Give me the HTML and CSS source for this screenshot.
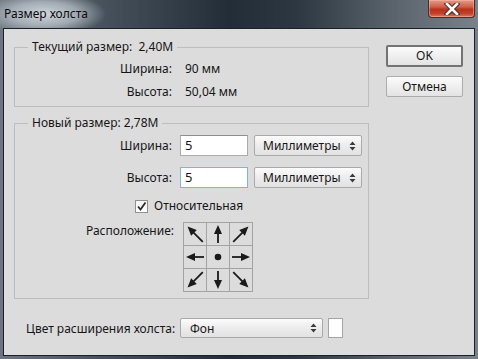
FILE: index.html
```html
<!DOCTYPE html>
<html lang="ru">
<head>
    <meta charset="UTF-8">
    <title>Размер холста</title>
    <link rel="stylesheet" href="styles.css">
</head>
<body>
    <div class="window">
        <div class="titlebar">
            <span class="title">Размер холста</span>
            <div class="close">
                <svg width="20" height="12" viewBox="0 0 20 12">
                    <path d="M5 1 L15 11 M15 1 L5 11" stroke="#4a2a26" stroke-width="4.6" stroke-linecap="square"/>
                    <path d="M5 1 L15 11 M15 1 L5 11" stroke="#fff" stroke-width="2.6" stroke-linecap="square"/>
                </svg>
            </div>
        </div>

        <div class="client">
            <div class="main">
                <fieldset class="group current">
                    <legend>Текущий размер:&nbsp; 2,40M</legend>
                    <div class="rows">
                        <span class="lbl">Ширина:</span><span class="val">90 мм</span>
                        <span class="lbl">Высота:</span><span class="val">50,04 мм</span>
                    </div>
                </fieldset>

                <fieldset class="group new">
                    <legend>Новый размер: 2,78M</legend>
                    <div class="fields">
                        <span class="lbl">Ширина:</span>
                        <div class="input">5</div>
                        <div class="select units">Миллиметры
                            <svg class="updown" width="7" height="10" viewBox="0 0 7 10"><path d="M0.5 4 L3.5 0.5 L6.5 4 Z M0.5 6 L3.5 9.5 L6.5 6 Z" fill="#3a3a3a"/></svg>
                        </div>
                        <span class="lbl">Высота:</span>
                        <div class="input focus">5</div>
                        <div class="select units">Миллиметры
                            <svg class="updown" width="7" height="10" viewBox="0 0 7 10"><path d="M0.5 4 L3.5 0.5 L6.5 4 Z M0.5 6 L3.5 9.5 L6.5 6 Z" fill="#3a3a3a"/></svg>
                        </div>
                    </div>

                    <div class="check">
                        <span class="box">
                            <svg width="11" height="11" viewBox="0 0 11 11"><path d="M2 5.5 L4.5 8.5 L9.5 1.5" fill="none" stroke="#2b2b2b" stroke-width="1.8"/></svg>
                        </span>
                        Относительная
                    </div>

                    <div class="anchor-row">
                        <span class="lbl">Расположение:</span>
                        <div class="anchor">
                            <div class="cell"><svg viewBox="0 0 22 22"><use href="#diag" transform="rotate(-45 11 11)"/></svg></div>
                            <div class="cell"><svg viewBox="0 0 22 22"><use href="#arr"/></svg></div>
                            <div class="cell"><svg viewBox="0 0 22 22"><use href="#diag" transform="rotate(45 11 11)"/></svg></div>
                            <div class="cell"><svg viewBox="0 0 22 22"><use href="#arr" transform="rotate(-90 11 11)"/></svg></div>
                            <div class="cell"><svg viewBox="0 0 22 22"><circle cx="11" cy="11" r="3.3" fill="#1a1a1a"/></svg></div>
                            <div class="cell"><svg viewBox="0 0 22 22"><use href="#arr" transform="rotate(90 11 11)"/></svg></div>
                            <div class="cell"><svg viewBox="0 0 22 22"><use href="#diag" transform="rotate(-135 11 11)"/></svg></div>
                            <div class="cell"><svg viewBox="0 0 22 22"><use href="#arr" transform="rotate(180 11 11)"/></svg></div>
                            <div class="cell"><svg viewBox="0 0 22 22"><use href="#diag" transform="rotate(135 11 11)"/></svg></div>
                        </div>
                    </div>
                </fieldset>

                <div class="ext">
                    <span class="ext-lbl">Цвет расширения холста:</span>
                    <div class="select bg">Фон
                        <svg class="updown" width="7" height="10" viewBox="0 0 7 10"><path d="M0.5 4 L3.5 0.5 L6.5 4 Z M0.5 6 L3.5 9.5 L6.5 6 Z" fill="#3a3a3a"/></svg>
                    </div>
                    <div class="swatch"></div>
                </div>
            </div>

            <div class="side">
                <div class="btn default">OK</div>
                <div class="btn">Отмена</div>
            </div>
        </div>
    </div>

    <svg width="0" height="0" class="defs">
        <defs>
            <g id="arr">
                <path d="M11 20 L11 9" stroke="#1a1a1a" stroke-width="1.8"/>
                <path d="M11 2 L15 11 L7 11 Z" fill="#1a1a1a"/>
            </g>
            <g id="diag">
                <path d="M11 22 L11 9" stroke="#1a1a1a" stroke-width="1.8"/>
                <path d="M11 0.5 L15 9.5 L7 9.5 Z" fill="#1a1a1a"/>
            </g>
        </defs>
    </svg>
</body>
</html>
```

FILE: styles.css
```css
body {
    margin: 0;
    font-family: "Noto Sans", "DejaVu Sans", sans-serif;
    font-size: 12px;
    color: #161616;
}
.window {
    width: 478px;
    height: 359px;
    display: flex;
    flex-direction: column;
    background:
        radial-gradient(ellipse 62px 22px at 44px 14px, rgba(214, 220, 226, 0.95) 0%, rgba(190, 198, 206, 0.7) 55%, rgba(120, 130, 140, 0) 100%),
        linear-gradient(to right, #6d7680 0%, #47515b 22%, #222d37 48%, #2c3741 62%, #5a636b 82%, #79828a 100%);
    overflow: hidden;
}
.titlebar {
    height: 28px;
    display: flex;
    justify-content: space-between;
    align-items: flex-start;
}
.title {
    margin: 6px 0 0 4px;
    line-height: 16px;
    color: #0c0c0c;
}
.close {
    width: 45px;
    height: 17px;
    margin-right: 3px;
    border: 1px solid #4b2b27;
    border-top: none;
    border-radius: 0 0 4px 4px;
    background: linear-gradient(#e29a88 0%, #d0604a 40%, #b9321a 55%, #c4402a 80%, #dc7a60 100%);
    box-shadow: inset 0 0 0 1px rgba(255, 200, 180, 0.45);
    display: flex;
    align-items: center;
    justify-content: center;
}
.client {
    flex: 1;
    margin: 0 3px 3px 3px;
    border: 1px solid #1b2128;
    background-color: #dcdcdc;
    display: flex;
}
.main {
    padding-left: 10px;
    width: 355px;
}
.group {
    margin: 0;
    padding: 0;
    border: 1px solid #bdbdbd;
    min-width: 0;
}
.group legend {
    margin-left: 13px;
    padding: 0 4px;
    line-height: 16px;
}
.current {
    margin-top: 10px;
    padding: 6px 0 6px;
}
.rows {
    display: grid;
    grid-template-columns: 157px auto;
    row-gap: 7px;
    line-height: 16px;
}
.lbl {
    text-align: right;
}
.val {
    padding-left: 13px;
}
.new {
    margin-top: 8px;
    padding: 4px 0 6px;
}
.fields {
    display: grid;
    grid-template-columns: 157px 68px 106px;
    column-gap: 8px;
    row-gap: 11px;
    align-items: center;
}
.fields .select {
    margin-left: -2px;
}
.input {
    height: 21px;
    box-sizing: border-box;
    border: 1px solid #ababab;
    border-top-color: #8e8e8e;
    background-color: #fff;
    padding-left: 4px;
    line-height: 19px;
    font-size: 13px;
}
.input.focus {
    border-color: #7eb4ea;
}
.select {
    height: 21px;
    box-sizing: border-box;
    border: 1px solid #a9a9a9;
    border-radius: 2px;
    background: linear-gradient(#fcfcfc, #ececec 50%, #e2e2e2);
    padding-left: 8px;
    line-height: 19px;
    display: flex;
    justify-content: space-between;
    align-items: center;
}
.updown {
    margin-right: 5px;
}
.check {
    margin-top: 10px;
    padding-left: 120px;
    display: flex;
    align-items: center;
    gap: 6px;
    line-height: 16px;
}
.box {
    width: 13px;
    height: 13px;
    box-sizing: border-box;
    border: 1px solid #8f8f8f;
    background: linear-gradient(#f4f4f4, #ffffff);
    display: flex;
    align-items: center;
    justify-content: center;
}
.anchor-row {
    margin-top: 8px;
    display: grid;
    grid-template-columns: 159px auto;
    column-gap: 9px;
    line-height: 16px;
}
.anchor-row .lbl {
    padding-top: 1px;
}
.anchor {
    display: grid;
    grid-template-columns: repeat(3, 22px);
    grid-template-rows: repeat(3, 22px);
    gap: 1px;
    width: 70px;
    border: 1px solid #a3a3a3;
    box-sizing: border-box;
    background-color: #a3a3a3;
}
.cell {
    background-color: #dcdcdc;
}
.cell svg {
    display: block;
    width: 22px;
    height: 22px;
}
.ext {
    margin-top: 19px;
    padding-left: 12px;
    display: flex;
    align-items: center;
}
.ext-lbl {
    width: 154px;
}
.select.bg {
    width: 143px;
    height: 20px;
    padding-left: 9px;
}
.swatch {
    width: 15px;
    height: 20px;
    margin-left: 5px;
    box-sizing: border-box;
    border: 1px solid #a5a5a5;
    background-color: #fff;
}
.side {
    margin-left: 17px;
    padding-top: 16px;
    display: flex;
    flex-direction: column;
    gap: 9px;
}
.btn {
    width: 77px;
    height: 21px;
    box-sizing: border-box;
    border: 1px solid #acacac;
    border-radius: 2px;
    background: linear-gradient(#fbfbfb, #efefef 50%, #e3e3e3);
    text-align: center;
    line-height: 19px;
}
.btn.default {
    height: 22px;
    border: 2px solid #737373;
    line-height: 18px;
}
.defs {
    position: absolute;
}
```
